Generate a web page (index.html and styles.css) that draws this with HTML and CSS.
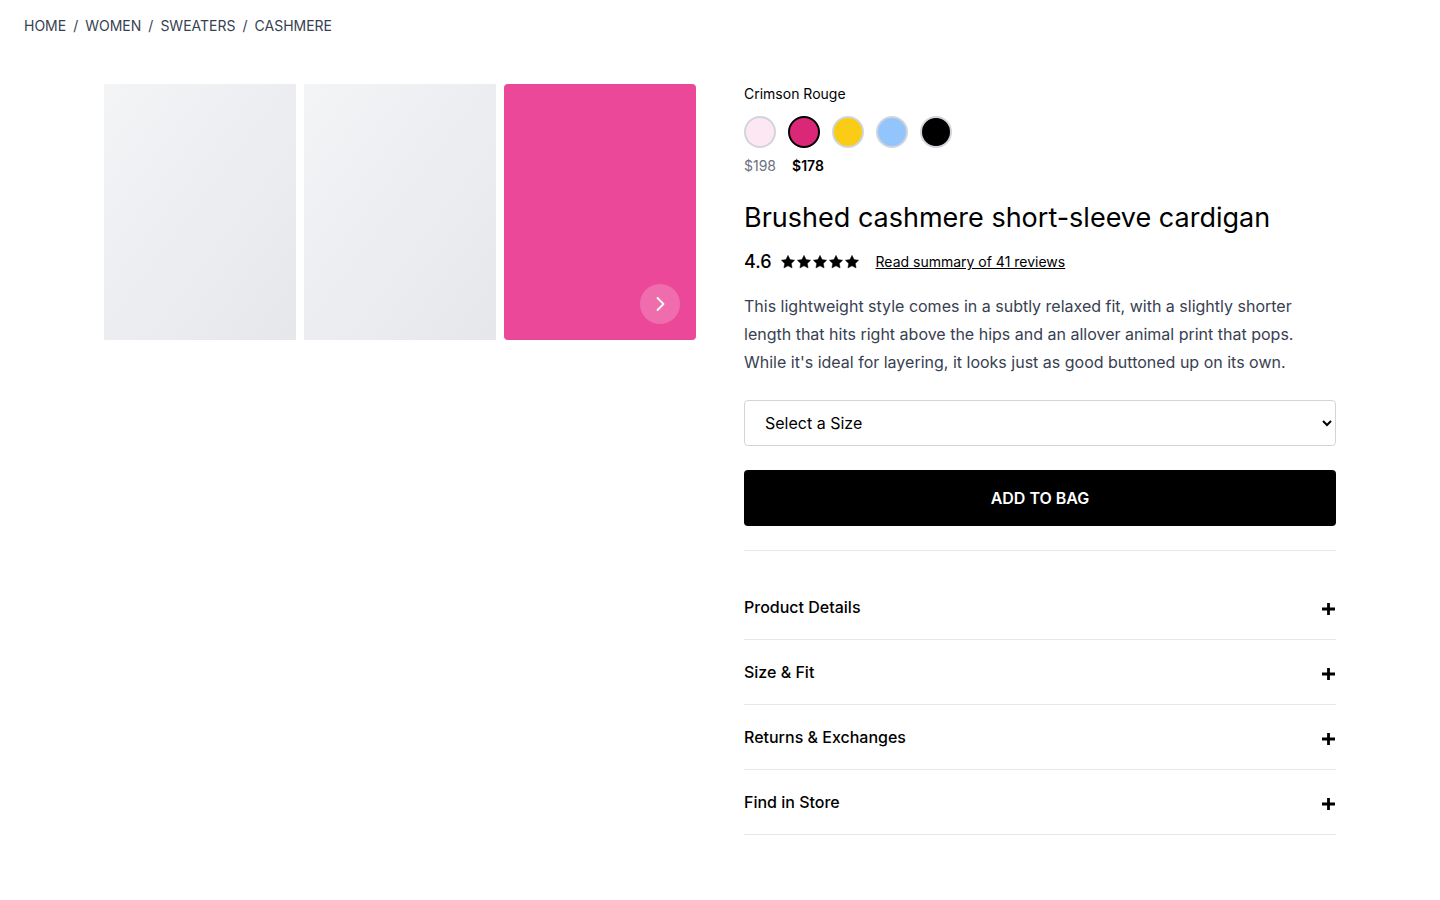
FILE: index.html
```html
<!DOCTYPE html>
<html lang="en">
<head>
<meta charset="utf-8">
<meta name="viewport" content="width=device-width, initial-scale=1">
<title>Brushed cashmere short-sleeve cardigan</title>
<link rel="stylesheet" href="styles.css">
</head>
<body>
<svg class="sprite" aria-hidden="true">
  <symbol id="star" viewBox="0 0 24 24"><path d="M12 2l3.09 6.26L22 9.27l-5 4.870 1.180 6.880L12 17.770l-6.180 3.250L7 14.140 2 9.270l6.910-1.010z" stroke="currentColor" stroke-width="0.6" stroke-linejoin="round"/></symbol>
  <symbol id="plus" viewBox="0 0 14 14"><path d="M6.500 1v12M0 7h13" fill="none" stroke="currentColor" stroke-width="2.8"/></symbol>
</svg>
<nav class="breadcrumb" aria-label="Breadcrumb">
  <a href="#">HOME</a><span>/</span><a href="#">WOMEN</a><span>/</span><a href="#">SWEATERS</a><span>/</span><a href="#">CASHMERE</a>
</nav>
<main class="product">
  <section class="gallery" aria-label="Product images">
    <div class="thumb"></div>
    <div class="thumb"></div>
    <div class="thumb thumb-active">
      <button class="next" type="button" aria-label="Next image">
        <svg width="24" height="24" viewBox="0 0 24 24" fill="none" stroke="currentColor" stroke-width="1.8" stroke-linecap="round" stroke-linejoin="round"><path d="M9.500 6l6 6-6 6"/></svg>
      </button>
    </div>
  </section>
  <section class="info">
    <p class="color-name">Crimson Rouge</p>
    <div class="swatches">
      <button class="swatch blush" type="button" aria-label="Blush"></button>
      <button class="swatch rouge" type="button" aria-label="Crimson Rouge" aria-pressed="true"></button>
      <button class="swatch yellow" type="button" aria-label="Yellow"></button>
      <button class="swatch blue" type="button" aria-label="Blue"></button>
      <button class="swatch black" type="button" aria-label="Black"></button>
    </div>
    <div class="prices"><span class="old-price">$198</span><span class="price">$178</span></div>
    <h1 class="title">Brushed cashmere short-sleeve cardigan</h1>
    <div class="rating">
      <span class="score">4.6</span>
      <span class="stars" role="img" aria-label="4.6 out of 5 stars">
        <svg class="star"><use href="#star"/></svg><svg class="star"><use href="#star"/></svg><svg class="star"><use href="#star"/></svg><svg class="star"><use href="#star"/></svg><svg class="star"><use href="#star"/></svg>
      </span>
      <a class="reviews" href="#">Read summary of 41 reviews</a>
    </div>
    <p class="description">This lightweight style comes in a subtly relaxed fit, with a slightly shorter length that hits right above the hips and an allover animal print that pops. While it's ideal for layering, it looks just as good buttoned up on its own.</p>
    <select class="size" aria-label="Size"><option>Select a Size</option><option>Small</option><option>Medium</option><option>Large</option></select>
    <button class="add" type="button">ADD TO BAG</button>
    <div class="accordion">
      <button class="row" type="button">Product Details<svg class="plus"><use href="#plus"/></svg></button>
      <button class="row" type="button">Size &amp; Fit<svg class="plus"><use href="#plus"/></svg></button>
      <button class="row" type="button">Returns &amp; Exchanges<svg class="plus"><use href="#plus"/></svg></button>
      <button class="row" type="button">Find in Store<svg class="plus"><use href="#plus"/></svg></button>
    </div>
  </section>
</main>
</body>
</html>
```
FILE: styles.css
```css
* { box-sizing: border-box; }
body {
  margin: 0;
  background: #fff;
  color: #000;
  font: 16px/24px Inter, "Liberation Sans", sans-serif;
}
h1, p { margin: 0; font-weight: 400; }
button, select { font: inherit; color: inherit; cursor: pointer; }
a { color: inherit; }
.sprite { display: none; }

.breadcrumb {
  display: flex;
  gap: 7px;
  padding: 16px 24px;
  color: #374151;
  font-size: 14px;
  line-height: 20px;
}
.breadcrumb a { text-decoration: none; }

.product {
  display: grid;
  grid-template-columns: 1fr 1fr;
  gap: 48px;
  max-width: 1280px;
  margin: 0 auto;
  padding: 32px 24px;
}

.gallery {
  display: grid;
  grid-template-columns: repeat(3, 1fr);
  gap: 8px;
  align-self: start;
}
.thumb {
  height: 256px;
  background: linear-gradient(to bottom right, #f3f4f6, #e5e7eb);
}
.thumb-active {
  display: flex;
  align-items: flex-end;
  justify-content: flex-end;
  padding: 16px;
  border-radius: 4px;
  background: #ec4899;
}
.next {
  display: flex;
  align-items: center;
  justify-content: center;
  width: 40px;
  height: 40px;
  padding: 0;
  border: 0;
  border-radius: 50%;
  background: rgba(255, 255, 255, 0.2);
  color: #fff;
}

.info { display: flex; flex-direction: column; }
.color-name { font-size: 14px; line-height: 20px; }
.swatches { display: flex; gap: 12px; margin: 12px 0 8px; }
.swatch {
  width: 32px;
  height: 32px;
  padding: 0;
  border: 2px solid #d1d5db;
  border-radius: 50%;
}
.blush { background: #fce7f3; }
.rouge { background: #db2777; border-color: #000; }
.yellow { background: #facc15; }
.blue { background: #93c5fd; }
.black { background: #000; }

.prices { display: flex; gap: 16px; font-size: 14px; line-height: 20px; }
.old-price { color: #6b7280; }
.price { font-weight: 600; }
.title { margin: 24px 0 12px; font-size: 27px; line-height: 36px; }

.rating { display: flex; align-items: center; margin-bottom: 16px; }
.score { font-size: 18px; line-height: 28px; font-weight: 500; }
.stars { display: flex; margin: 0 16px 0 8px; }
.star { width: 16px; height: 16px; }
.reviews { font-size: 14px; line-height: 20px; }
.description { color: #374151; line-height: 28px; }

.size {
  height: 46px;
  margin-top: 24px;
  padding: 0 0 0 16px;
  border: 1px solid #d1d5db;
  border-radius: 4px;
  background: #fff;
}
.add {
  margin: 24px 0;
  padding: 16px;
  border: 0;
  border-radius: 4px;
  background: #000;
  color: #fff;
  font-weight: 600;
}
.accordion { padding-top: 24px; border-top: 1px solid #e5e7eb; }
.row {
  display: flex;
  align-items: center;
  justify-content: space-between;
  width: 100%;
  padding: 20px 0;
  border: 0;
  border-bottom: 1px solid #e5e7eb;
  background: none;
  font-weight: 500;
}
.plus { width: 14px; height: 14px; margin-top: 4px; }
```
